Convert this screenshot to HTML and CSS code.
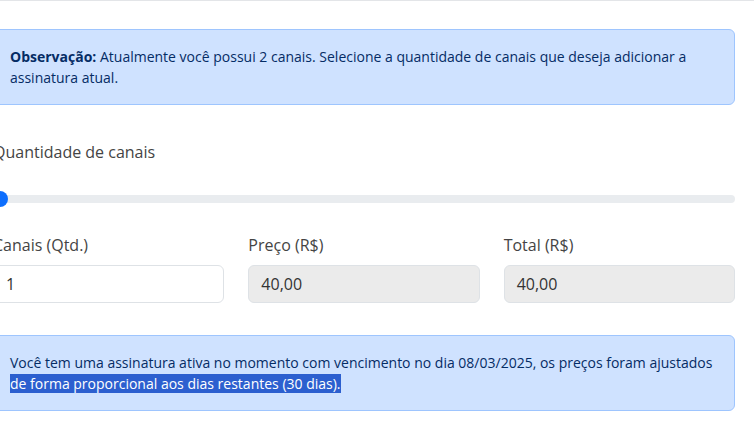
FILE: index.html
```html
<!DOCTYPE html>
<html lang="pt-BR">
<head>
<meta charset="utf-8">
<link rel="stylesheet" href="styles.css">
</head>
<body>
<div class="topline"></div>
<div class="content">
  <div class="alert">
    <strong>Observação:</strong> Atualmente você possui 2 canais. Selecione a quantidade de canais que deseja adicionar a assinatura atual.
  </div>
  <div class="field">
    <label class="label">Quantidade de canais</label>
    <div class="range">
      <div class="track"></div>
      <div class="thumb"></div>
    </div>
  </div>
  <div class="row">
    <div class="col">
      <label class="label">Canais (Qtd.)</label>
      <div class="input">1</div>
    </div>
    <div class="col">
      <label class="label">Preço (R$)</label>
      <div class="input disabled">40,00</div>
    </div>
    <div class="col">
      <label class="label">Total (R$)</label>
      <div class="input disabled">40,00</div>
    </div>
  </div>
  <div class="alert alert2">
    Você tem uma assinatura ativa no momento com vencimento no dia 08/03/2025, os preços foram ajustados <span class="sel">de forma proporcional aos dias restantes (30 dias).</span>
  </div>
</div>
</body>
</html>
```
FILE: styles.css
```css
* { box-sizing: border-box; }
html, body { margin: 0; padding: 0; background: #fff; }
body {
  font-family: "Open Sans", "Noto Sans", sans-serif;
  color: #212529;
  width: 754px;
  height: 426px;
  overflow: hidden;
}
.topline {
  height: 1px;
  background: #e3e5e8;
}
.content {
  margin-left: -7px;
  width: 742px;
  padding-top: 28px;
}
.alert {
  background: #cfe2ff;
  border: 1px solid #9ec5fe;
  border-radius: 6px;
  color: #052c65;
  font-size: 14px;
  line-height: 21px;
  padding: 16px;
  height: 76px;
}
.alert strong { font-weight: 700; }
.field { margin-top: 35px; }
.label {
  display: block;
  font-size: 16px;
  line-height: 24px;
  color: #444;
  margin-bottom: 8px;
}
.range {
  position: relative;
  height: 16px;
  margin-top: 27px;
}
.track {
  position: absolute;
  left: 0; right: 0; top: 4px;
  height: 8px;
  background: #e9ecef;
  border-radius: 4px;
}
.thumb {
  position: absolute;
  left: -1px; top: 0;
  width: 16px; height: 16px;
  border-radius: 50%;
  background: #0d6efd;
}
.row {
  display: grid;
  grid-template-columns: 1fr 1fr 1fr;
  column-gap: 24px;
  margin-top: 26px;
}
.input {
  height: 38px;
  border: 1px solid #dee2e6;
  border-radius: 6px;
  padding: 6px 12px;
  font-size: 16px;
  line-height: 24px;
  color: #333;
  background: #fff;
}
.input.disabled { background: #ebebeb; }
.alert2 { margin-top: 32px; }
.sel { background: #2c5fcf; color: #fff; }
```
